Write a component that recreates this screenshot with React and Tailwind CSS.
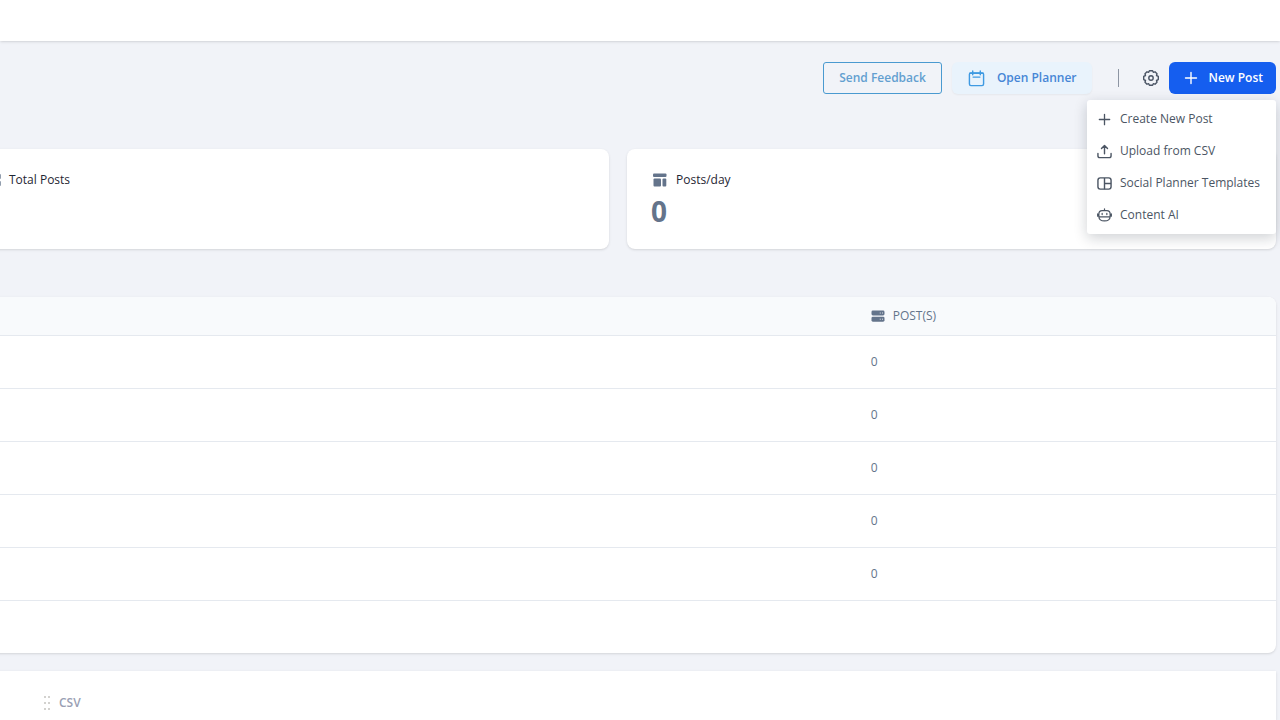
import React from "react";

const PlusIcon = ({ className }) => (
  <svg viewBox="0 0 16 16" className={className} fill="none" stroke="currentColor" strokeWidth="1.4" strokeLinecap="round">
    <path d="M8 2.5v11M2.5 8h11" />
  </svg>
);

const CalendarIcon = ({ className }) => (
  <svg viewBox="0 0 18 18" className={className} fill="none" stroke="currentColor" strokeWidth="1.5" strokeLinecap="round" strokeLinejoin="round">
    <rect x="1.5" y="3" width="15" height="13.5" rx="1.6" />
    <path d="M5 1v4M13 1v4M2 3.5h14M5.4 7.5h7.2" />
  </svg>
);

const GearIcon = ({ className }) => (
  <svg viewBox="1 0.7 16 16" className={className} fill="none" stroke="currentColor" strokeWidth="1.4" strokeLinejoin="round">
    <path d="M7.4 1.5h3.2l.7 1.5 1.7-.5 2 2-.5 1.700 1.800.9v3.200l-1.800.9.5 1.700-2 2-1.700-.5-.7 1.500H7.400l-.7-1.500-1.700.5-2-2 .5-1.700-1.800-.9V7.100l1.800-.9L3 4.500l2-2 1.700.5z" />
    <circle cx="9" cy="8.7" r="2.2" />
  </svg>
);

const UploadIcon = ({ className }) => (
  <svg viewBox="0 0 16 16" className={className} fill="none" stroke="currentColor" strokeWidth="1.5" strokeLinecap="round" strokeLinejoin="round">
    <path d="M8 10.5V2M4.8 4.8 8 1.5l3.2 3.3M1 10v2.5c0 1.2.7 2 2 2h10c1.300 0 2-.8 2-2V10" />
  </svg>
);

const TemplateIcon = ({ className }) => (
  <svg viewBox="0 0 16 16" className={className} fill="none" stroke="currentColor" strokeWidth="1.5">
    <rect x="1" y="2" width="14" height="12" rx="2.5" />
    <path d="M8 2v12M8 8h7" />
  </svg>
);

const BotIcon = ({ className }) => (
  <svg viewBox="0 0 16 16" className={className} fill="none" stroke="currentColor" strokeWidth="1.3" strokeLinecap="round">
    <path d="M5.500 2.800h5c2.200 0 3.500 1.400 3.500 3.500v2.700c0 3-2.300 4.800-6 4.800S2 12 2 9V6.300c0-2.100 1.300-3.500 3.500-3.500zM8 .8v2M.7 6.300v2.500M15.300 6.300v2.500M2 9.500h12" />
    <path d="M5.500 5.800v1.200M10.500 5.800v1.200" />
  </svg>
);

const PanelIcon = ({ className }) => (
  <svg viewBox="0 0 16 16" className={className} fill="currentColor">
    <rect x="0" y="1.5" width="13.5" height="3.5" rx="1" />
    <rect x="0.5" y="6.5" width="7.5" height="8" rx="1" />
    <rect x="9.5" y="6.5" width="3.8" height="8" rx="1" />
  </svg>
);

const GridIcon = ({ className }) => (
  <svg viewBox="0 0 16 16" className={className} fill="currentColor">
    <rect x="0" y="2" width="6.500" height="5" rx="1" />
    <rect x="0" y="9" width="6.500" height="5" rx="1" />
    <rect x="8" y="2" width="6.700" height="5" rx="1" />
    <rect x="8" y="9" width="6.700" height="5" rx="1" />
  </svg>
);

const ServerIcon = ({ className }) => (
  <svg viewBox="0 0 14 14" className={className}>
    <rect x="0.5" y="1.5" width="13" height="5" rx="1.4" fill="currentColor" />
    <rect x="0.5" y="7.7" width="13" height="5" rx="1.4" fill="currentColor" />
    <path d="M8.8 4h.9M11 4h.9M8.8 10.200h.9M11 10.200h.9" stroke="white" strokeWidth="0.9" />
  </svg>
);

const GripIcon = ({ className }) => (
  <svg viewBox="0 0 8 14" className={className} fill="currentColor">
    {[1, 7, 13].map((y) => (
      <g key={y}>
        <circle cx="2" cy={y} r="1" />
        <circle cx="6" cy={y} r="1" />
      </g>
    ))}
  </svg>
);

const menuItems = [
  { label: "Create New Post", icon: PlusIcon },
  { label: "Upload from CSV", icon: UploadIcon },
  { label: "Social Planner Templates", icon: TemplateIcon },
  { label: "Content AI", icon: BotIcon },
];

const stats = [
  { label: "Total Posts", icon: GridIcon },
  { label: "Posts/day", value: 0, icon: PanelIcon },
];

const rows = [0, 0, 0, 0, 0];

const Toolbar = () => (
  <div className="flex items-center justify-end">
    <button className="h-8 rounded-[3px] border border-[#4a9ad0] px-[15px] text-[12px] font-semibold text-[#639fd0]">
      Send Feedback
    </button>
    <button className="ml-2.5 flex h-8 items-center gap-3 rounded-md bg-[#e9f3fc] px-4 text-[12px] font-semibold text-[#4686d6] shadow-xs">
      <CalendarIcon className="size-[17px] text-[#3f9ae2]" />
      Open Planner
    </button>
    <span className="ml-[26px] h-[18px] w-px bg-[#8d95a3]" />
    <button aria-label="Settings" className="ml-6 text-[#4b5565]">
      <GearIcon className="size-4" />
    </button>
    <div className="relative ml-2.5">
      <button
        aria-haspopup="menu"
        aria-expanded="true"
        className="flex h-8 items-center gap-[9px] rounded-md bg-[#155eef] pl-3.5 pr-[13px] text-[12px] font-semibold text-white"
      >
        <PlusIcon className="size-4" />
        New Post
      </button>
      <div
        role="menu"
        className="absolute right-0 top-full z-10 mt-1.5 w-[189px] rounded-[3px] bg-white py-[3px] shadow-[0_4px_14px_rgba(16,24,40,0.2)]"
      >
        {menuItems.map(({ label, icon: Icon }) => (
          <button
            key={label}
            role="menuitem"
            className="flex h-8 w-full items-center gap-2 whitespace-nowrap px-[9px] text-[12px] text-[#4b5563]"
          >
            <span className="flex w-4 shrink-0 justify-center">
              <Icon className="size-[15px]" />
            </span>
            {label}
          </button>
        ))}
      </div>
    </div>
  </div>
);

const App = () => {
  return (
    <div className="flex min-h-screen flex-col overflow-hidden bg-[#f1f3f8] font-['Open_Sans','Noto_Sans',sans-serif]">
      <header className="h-[41px] shrink-0 bg-white shadow" />

      <main className="-ml-10 flex flex-1 flex-col pr-1 pt-[21px]">
        <Toolbar />

        {/* Stats */}
        <div className="mt-[55px] grid grid-cols-2 gap-[18px]">
          {stats.map(({ label, value, icon: Icon }) => (
            <div key={label} className="h-[100px] rounded-lg bg-white px-6 pt-5 shadow">
              <div className="flex h-[22px] items-center gap-[7px] pl-0.5 text-[12px] font-medium text-[#1f2633]">
                <Icon className="size-4 text-[#64748b]" />
                {label}
              </div>
              <div className="mt-1 text-[28px] leading-8 font-bold text-[#64748b]">{value}</div>
            </div>
          ))}
        </div>

        {/* Posts table */}
        <div className="mt-12 overflow-hidden rounded-lg bg-white pb-[52px] shadow">
          <table className="w-full table-fixed text-left">
            <thead>
              <tr className="h-[38px] border-b border-[#e5e9ef] bg-[#f8fafc]">
                <th className="w-[67%]" />
                <th className="pl-[29px] text-[12px] font-medium text-[#64748b]">
                  <span className="flex items-center gap-2">
                    <ServerIcon className="size-3.5" />
                    POST(S)
                  </span>
                </th>
              </tr>
            </thead>
            <tbody>
              {rows.map((count, i) => (
                <tr key={i} className="h-[53px] border-b border-[#e5e9ef]">
                  <td />
                  <td className="pl-[29px] text-[12px] text-[#64748b]">{count}</td>
                </tr>
              ))}
            </tbody>
          </table>
        </div>

        {/* Export */}
        <div className="mt-[18px] flex-1 bg-white pl-[83px] pt-[21px] shadow">
          <button className="flex h-[22px] items-center gap-2 text-[12px] font-semibold text-[#9a9fb4]">
            <GripIcon className="h-3.5 w-2 text-[#c4c3bf]" />
            CSV
          </button>
        </div>
      </main>
    </div>
  );
};

export default App;
